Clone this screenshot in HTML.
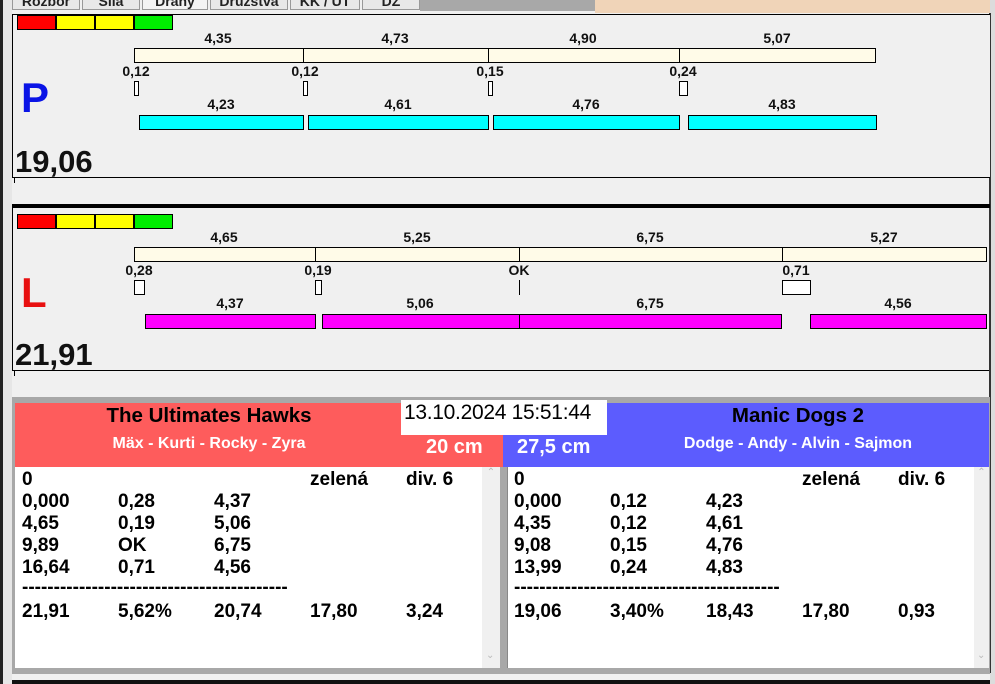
<!DOCTYPE html>
<html><head><meta charset="utf-8"><style>
*{margin:0;padding:0;box-sizing:border-box}
body{width:995px;height:684px;overflow:hidden;background:#f0f0f0;font-family:"Liberation Sans",Arial,sans-serif;position:relative}
div{position:absolute}
.b{border:1px solid #000}
.y{background:#fffbe8;border:1px solid #000;height:15px}
.c{background:#00ffff;border:1px solid #000;height:15px}
.m{background:#ff00ff;border:1px solid #000;height:15px}
.lb{font-size:14px;font-weight:bold;text-align:center;width:60px;color:#111}
.bx{background:#fff;border:1px solid #000;height:15px}
.t{font-size:19px;font-weight:bold;color:#000;white-space:nowrap}
.tab{top:-6px;height:16px;background:#e8e8e8;border:1px solid #999;font-size:14px;font-weight:bold;text-align:center;line-height:12px;color:#222}
</style></head><body>
<div style="left:0;top:0;width:3px;height:684px;background:#222"></div>
<div style="left:3px;top:0;width:9px;height:684px;background:#e6e6e6"></div>
<div style="left:12px;top:0;width:983px;height:13px;background:#f0f0f0"></div>
<div style="left:420px;top:0;width:175px;height:11px;background:#a8a8a8"></div>
<div style="left:595px;top:0;width:395px;height:13px;background:#f0d4b8"></div>
<div class="tab" style="left:12px;width:68px">Rozbor</div>
<div class="tab" style="left:82px;width:58px">Síla</div>
<div class="tab" style="left:142px;width:66px;background:#f4f4f4">Dráhy</div>
<div class="tab" style="left:210px;width:78px">Družstva</div>
<div class="tab" style="left:290px;width:70px">KK / UT</div>
<div class="tab" style="left:362px;width:58px">DZ</div>
<div style="left:990px;top:0;width:5px;height:684px;background:#dcdcdc"></div>
<div style="left:989px;top:13px;width:2px;height:660px;background:#333"></div>

<div style="left:12px;top:14px;width:978px;height:164px;border-top:1px solid #000;border-left:1px solid #000;border-bottom:1px solid #000;background:#f0f0f0"></div>
<div style="left:17px;top:15px;width:39px;height:15px;background:#f00" class="b"></div>
<div style="left:56px;top:15px;width:39px;height:15px;background:#ff0" class="b"></div>
<div style="left:95px;top:15px;width:39px;height:15px;background:#ff0" class="b"></div>
<div style="left:134px;top:15px;width:39px;height:15px;background:#0e0" class="b"></div>
<div class="lb" style="left:188px;top:30px">4,35</div>
<div class="lb" style="left:365px;top:30px">4,73</div>
<div class="lb" style="left:553px;top:30px">4,90</div>
<div class="lb" style="left:747px;top:30px">5,07</div>
<div class="y" style="left:134px;top:48px;width:170px"></div>
<div class="y" style="left:303px;top:48px;width:186px"></div>
<div class="y" style="left:488px;top:48px;width:192px"></div>
<div class="y" style="left:679px;top:48px;width:197px"></div>
<div class="lb" style="left:106px;top:63px">0,12</div>
<div class="lb" style="left:275px;top:63px">0,12</div>
<div class="lb" style="left:460px;top:63px">0,15</div>
<div class="lb" style="left:653px;top:63px">0,24</div>
<div class="bx" style="left:134px;top:81px;width:5px"></div>
<div class="bx" style="left:303px;top:81px;width:5px"></div>
<div class="bx" style="left:488px;top:81px;width:5px"></div>
<div class="bx" style="left:679px;top:81px;width:9px"></div>
<div style="left:21px;top:74px;font-size:42px;font-weight:bold;color:#0a14e6">P</div>
<div class="lb" style="left:191px;top:96px">4,23</div>
<div class="lb" style="left:368px;top:96px">4,61</div>
<div class="lb" style="left:556px;top:96px">4,76</div>
<div class="lb" style="left:752px;top:96px">4,83</div>
<div class="c" style="left:139px;top:115px;width:165px"></div>
<div class="c" style="left:308px;top:115px;width:181px"></div>
<div class="c" style="left:493px;top:115px;width:187px"></div>
<div class="c" style="left:688px;top:115px;width:189px"></div>
<div style="left:15px;top:144px;font-size:31px;font-weight:bold;color:#111">19,06</div>
<div style="left:14px;top:178px;width:1px;height:5px;background:#000"></div>
<div style="left:12px;top:204px;width:978px;height:4px;background:#000"></div>

<div style="left:12px;top:208px;width:977px;height:163px;border-left:1px solid #000;border-bottom:1px solid #000;background:#f0f0f0"></div>
<div style="left:17px;top:214px;width:39px;height:15px;background:#f00" class="b"></div>
<div style="left:56px;top:214px;width:39px;height:15px;background:#ff0" class="b"></div>
<div style="left:95px;top:214px;width:39px;height:15px;background:#ff0" class="b"></div>
<div style="left:134px;top:214px;width:39px;height:15px;background:#0e0" class="b"></div>
<div class="lb" style="left:194px;top:229px">4,65</div>
<div class="lb" style="left:387px;top:229px">5,25</div>
<div class="lb" style="left:620px;top:229px">6,75</div>
<div class="lb" style="left:854px;top:229px">5,27</div>
<div class="y" style="left:134px;top:247px;width:182px"></div>
<div class="y" style="left:315px;top:247px;width:205px"></div>
<div class="y" style="left:519px;top:247px;width:264px"></div>
<div class="y" style="left:782px;top:247px;width:205px"></div>
<div class="lb" style="left:109px;top:262px">0,28</div>
<div class="lb" style="left:288px;top:262px">0,19</div>
<div class="lb" style="left:489px;top:262px">OK</div>
<div class="lb" style="left:766px;top:262px">0,71</div>
<div class="bx" style="left:134px;top:280px;width:11px"></div>
<div class="bx" style="left:315px;top:280px;width:7px"></div>
<div style="left:519px;top:280px;width:1px;height:15px;background:#000"></div>
<div class="bx" style="left:782px;top:280px;width:29px"></div>
<div style="left:21px;top:269px;font-size:42px;font-weight:bold;color:#e81010">L</div>
<div class="lb" style="left:200px;top:295px">4,37</div>
<div class="lb" style="left:390px;top:295px">5,06</div>
<div class="lb" style="left:620px;top:295px">6,75</div>
<div class="lb" style="left:868px;top:295px">4,56</div>
<div class="m" style="left:145px;top:314px;width:171px"></div>
<div class="m" style="left:322px;top:314px;width:198px"></div>
<div class="m" style="left:519px;top:314px;width:263px"></div>
<div class="m" style="left:810px;top:314px;width:177px"></div>
<div style="left:15px;top:337px;font-size:31px;font-weight:bold;color:#111">21,91</div>
<div style="left:14px;top:371px;width:1px;height:5px;background:#000"></div>

<div style="left:12px;top:397px;width:978px;height:277px;background:#a8a8a8"></div>
<div style="left:15px;top:403px;width:488px;height:64px;background:#fe5c5c"></div>
<div style="left:503px;top:403px;width:486px;height:64px;background:#5c5cfe"></div>
<div style="left:401px;top:400px;width:206px;height:35px;background:#fff"></div>
<div style="left:404px;top:401px;font-size:21px;color:#000;letter-spacing:-0.3px">13.10.2024 15:51:44</div>
<div style="left:15px;top:404px;width:388px;text-align:center;font-size:20.5px;font-weight:bold;color:#000">The Ultimates Hawks</div>
<div style="left:15px;top:435px;width:388px;text-align:center;font-size:16px;font-weight:bold;color:#fff">Mäx - Kurti - Rocky - Zyra</div>
<div style="left:426px;top:436px;font-size:20px;font-weight:bold;color:#fff">20 cm</div>
<div style="left:517px;top:436px;font-size:20px;font-weight:bold;color:#fff">27,5 cm</div>
<div style="left:607px;top:404px;width:382px;text-align:center;font-size:20.5px;font-weight:bold;color:#000">Manic Dogs 2</div>
<div style="left:607px;top:435px;width:382px;text-align:center;font-size:16px;font-weight:bold;color:#fff">Dodge - Andy - Alvin - Sajmon</div>
<div style="left:15px;top:467px;width:485px;height:201px;background:#fff"></div>
<div style="left:482px;top:467px;width:18px;height:201px;background:#f0f0f0;color:#bbb;font-size:10px;text-align:center">⌃<div style="left:4px;top:183px">⌄</div></div>
<div style="left:507px;top:467px;width:482px;height:201px;background:#fff;border-left:1px solid #888"></div>
<div style="left:974px;top:467px;width:15px;height:201px;background:#f0f0f0;color:#bbb;font-size:10px;text-align:center">⌃<div style="left:3px;top:183px">⌄</div></div>

<div class="t" style="left:22px;top:469px">0</div><div class="t" style="left:310px;top:469px">zelená</div><div class="t" style="left:406px;top:469px">div. 6</div>
<div class="t" style="left:22px;top:491px">0,000</div><div class="t" style="left:118px;top:491px">0,28</div><div class="t" style="left:214px;top:491px">4,37</div>
<div class="t" style="left:22px;top:513px">4,65</div><div class="t" style="left:118px;top:513px">0,19</div><div class="t" style="left:214px;top:513px">5,06</div>
<div class="t" style="left:22px;top:535px">9,89</div><div class="t" style="left:118px;top:535px">OK</div><div class="t" style="left:214px;top:535px">6,75</div>
<div class="t" style="left:22px;top:557px">16,64</div><div class="t" style="left:118px;top:557px">0,71</div><div class="t" style="left:214px;top:557px">4,56</div>
<div class="t" style="left:22px;top:577px">------------------------------------------</div>
<div class="t" style="left:22px;top:601px">21,91</div><div class="t" style="left:118px;top:601px">5,62%</div><div class="t" style="left:214px;top:601px">20,74</div><div class="t" style="left:310px;top:601px">17,80</div><div class="t" style="left:406px;top:601px">3,24</div>

<div class="t" style="left:514px;top:469px">0</div><div class="t" style="left:802px;top:469px">zelená</div><div class="t" style="left:898px;top:469px">div. 6</div>
<div class="t" style="left:514px;top:491px">0,000</div><div class="t" style="left:610px;top:491px">0,12</div><div class="t" style="left:706px;top:491px">4,23</div>
<div class="t" style="left:514px;top:513px">4,35</div><div class="t" style="left:610px;top:513px">0,12</div><div class="t" style="left:706px;top:513px">4,61</div>
<div class="t" style="left:514px;top:535px">9,08</div><div class="t" style="left:610px;top:535px">0,15</div><div class="t" style="left:706px;top:535px">4,76</div>
<div class="t" style="left:514px;top:557px">13,99</div><div class="t" style="left:610px;top:557px">0,24</div><div class="t" style="left:706px;top:557px">4,83</div>
<div class="t" style="left:514px;top:577px">------------------------------------------</div>
<div class="t" style="left:514px;top:601px">19,06</div><div class="t" style="left:610px;top:601px">3,40%</div><div class="t" style="left:706px;top:601px">18,43</div><div class="t" style="left:802px;top:601px">17,80</div><div class="t" style="left:898px;top:601px">0,93</div>
<div style="left:12px;top:680px;width:978px;height:4px;background:#111"></div>
</body></html>
